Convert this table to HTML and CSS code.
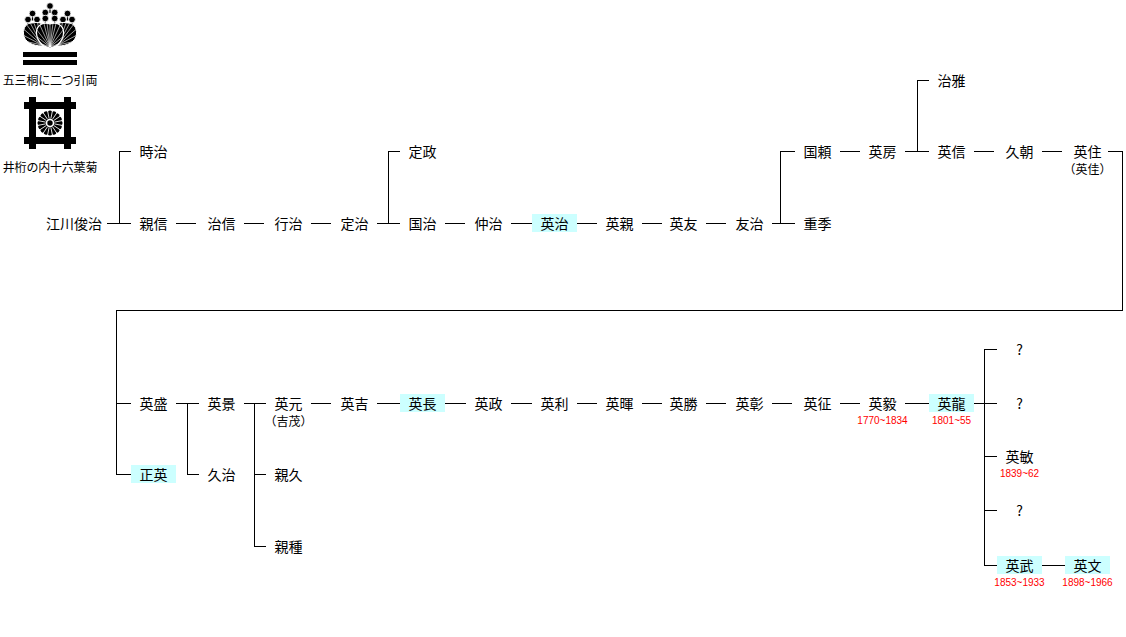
FILE: index.html
```html
<!DOCTYPE html>
<html lang="ja">
<head>
<meta charset="utf-8">
<title>江川家系図</title>
<link rel="stylesheet" href="styles.css">
</head>
<body>
<div class="tree">

  <div class="crests">
    <svg class="crest kiri" viewBox="0 0 56 68" width="56" height="68" aria-hidden="true">
      <defs>
        <path id="lfL" d="M20 46 C11 46 2 42 1.5 34 C1 27 5 22.5 10.5 23 C15 21.5 21 23 24 27 C26.5 31 25 40 20 46 Z"/>
        <path id="lfC" d="M28 48 C19 46 14 39 14.5 31.5 C15 25.5 21 21.5 28 24 C35 21.5 41 25.5 41.5 31.5 C42 39 37 46 28 48 Z"/>
        <clipPath id="clipL"><use href="#lfL"/></clipPath>
        <clipPath id="clipC"><use href="#lfC"/></clipPath>
        <g id="sideLeaf">
          <use href="#lfL" fill="#000" stroke="#fff" stroke-width="1"/>
          <g clip-path="url(#clipL)" stroke="#fff" stroke-width=".6">
            <line x1="20" y1="45" x2="-3" y2="40"/>
            <line x1="20" y1="45" x2="-3" y2="33"/>
            <line x1="20" y1="45" x2="-2" y2="26"/>
            <line x1="20" y1="45" x2="1" y2="20"/>
            <line x1="20" y1="45" x2="5" y2="17"/>
            <line x1="20" y1="45" x2="9" y2="15"/>
            <line x1="20" y1="45" x2="14" y2="15"/>
            <line x1="20" y1="45" x2="19" y2="15"/>
            <line x1="20" y1="45" x2="24" y2="16"/>
          </g>
        </g>
        <g id="bud">
          <line x1="0" y1="0" x2="0" y2="7" stroke="#000" stroke-width="1.2"/>
          <circle cx="0" cy="0" r="3.3" fill="#000" stroke="#fff" stroke-width=".8"/>
        </g>
      </defs>
      <use href="#bud" x="10.5" y="13.5"/>
      <use href="#bud" x="6" y="19.5"/>
      <use href="#bud" x="15" y="19.5"/>
      <use href="#bud" x="45.5" y="13.5"/>
      <use href="#bud" x="41" y="19.5"/>
      <use href="#bud" x="50" y="19.5"/>
      <use href="#bud" x="28" y="6"/>
      <use href="#bud" x="23.3" y="12.5"/>
      <use href="#bud" x="32.7" y="12.5"/>
      <use href="#bud" x="23.3" y="18.5"/>
      <use href="#bud" x="32.7" y="18.5"/>
      <use href="#sideLeaf"/>
      <use href="#sideLeaf" transform="translate(56 0) scale(-1 1)"/>
      <use href="#lfC" fill="#000" stroke="#fff" stroke-width="1.2"/>
      <g clip-path="url(#clipC)" stroke="#fff" stroke-width=".6">
        <line x1="28" y1="47" x2="9" y2="40"/>
        <line x1="28" y1="47" x2="9" y2="32"/>
        <line x1="28" y1="47" x2="11" y2="25"/>
        <line x1="28" y1="47" x2="15" y2="19"/>
        <line x1="28" y1="47" x2="20" y2="16"/>
        <line x1="28" y1="47" x2="24" y2="15"/>
        <line x1="28" y1="47" x2="28" y2="15"/>
        <line x1="28" y1="47" x2="32" y2="15"/>
        <line x1="28" y1="47" x2="36" y2="16"/>
        <line x1="28" y1="47" x2="41" y2="19"/>
        <line x1="28" y1="47" x2="45" y2="25"/>
        <line x1="28" y1="47" x2="47" y2="32"/>
        <line x1="28" y1="47" x2="47" y2="40"/>
      </g>
      <rect x="1" y="52" width="54" height="5" fill="#000"/>
      <rect x="1" y="60" width="54" height="5" fill="#000"/>
    </svg>
    <div class="crest-name first">五三桐に二つ引両</div>

    <svg class="crest igeta" viewBox="0 0 54 54" width="54" height="54" aria-hidden="true">
      <defs>
        <circle id="petal" cx="37" cy="27" r="2.5"/>
        <line id="vein" x1="31.5" y1="27" x2="40.5" y2="27" transform="rotate(11.25 27 27)"/>
      </defs>
      <g fill="#000">
        <rect x="1" y="6" width="52" height="7"/>
        <rect x="1" y="41" width="52" height="7"/>
        <rect x="6" y="1" width="7" height="52"/>
        <rect x="41" y="1" width="7" height="52"/>
        <circle cx="27" cy="27" r="10.2"/>
        <use href="#petal"/>
        <use href="#petal" transform="rotate(22.5 27 27)"/>
        <use href="#petal" transform="rotate(45 27 27)"/>
        <use href="#petal" transform="rotate(67.5 27 27)"/>
        <use href="#petal" transform="rotate(90 27 27)"/>
        <use href="#petal" transform="rotate(112.5 27 27)"/>
        <use href="#petal" transform="rotate(135 27 27)"/>
        <use href="#petal" transform="rotate(157.5 27 27)"/>
        <use href="#petal" transform="rotate(180 27 27)"/>
        <use href="#petal" transform="rotate(202.5 27 27)"/>
        <use href="#petal" transform="rotate(225 27 27)"/>
        <use href="#petal" transform="rotate(247.5 27 27)"/>
        <use href="#petal" transform="rotate(270 27 27)"/>
        <use href="#petal" transform="rotate(292.5 27 27)"/>
        <use href="#petal" transform="rotate(315 27 27)"/>
        <use href="#petal" transform="rotate(337.5 27 27)"/>
      </g>
      <g stroke="#fff" stroke-width=".8">
        <use href="#vein"/>
        <use href="#vein" transform="rotate(22.5 27 27)"/>
        <use href="#vein" transform="rotate(45 27 27)"/>
        <use href="#vein" transform="rotate(67.5 27 27)"/>
        <use href="#vein" transform="rotate(90 27 27)"/>
        <use href="#vein" transform="rotate(112.5 27 27)"/>
        <use href="#vein" transform="rotate(135 27 27)"/>
        <use href="#vein" transform="rotate(157.5 27 27)"/>
        <use href="#vein" transform="rotate(180 27 27)"/>
        <use href="#vein" transform="rotate(202.5 27 27)"/>
        <use href="#vein" transform="rotate(225 27 27)"/>
        <use href="#vein" transform="rotate(247.5 27 27)"/>
        <use href="#vein" transform="rotate(270 27 27)"/>
        <use href="#vein" transform="rotate(292.5 27 27)"/>
        <use href="#vein" transform="rotate(315 27 27)"/>
        <use href="#vein" transform="rotate(337.5 27 27)"/>
      </g>
      <circle cx="27" cy="27" r="4.3" fill="#fff"/>
      <circle cx="27" cy="27" r="2.7" fill="#000"/>
    </svg>
    <div class="crest-name second">井桁の内十六葉菊</div>
  </div>

  <!-- ===== upper generations ===== -->
  <div class="n root" style="grid-area: 7 / 1">江川俊治</div>
  <div class="hl w12" style="grid-area: 7 / 2"></div>
  <div class="brk ml12" style="grid-area: 4 / 2 / 8 / 3"></div>

  <div class="n" style="grid-area: 4 / 3">時治</div>
  <div class="n" style="grid-area: 7 / 3">親信</div>
  <div class="hl" style="grid-area: 7 / 4"></div>
  <div class="n" style="grid-area: 7 / 5">治信</div>
  <div class="hl" style="grid-area: 7 / 6"></div>
  <div class="n" style="grid-area: 7 / 7">行治</div>
  <div class="hl" style="grid-area: 7 / 8"></div>
  <div class="n" style="grid-area: 7 / 9">定治</div>
  <div class="hl w11" style="grid-area: 7 / 10"></div>
  <div class="brk ml11" style="grid-area: 4 / 10 / 8 / 11"></div>

  <div class="n" style="grid-area: 4 / 11">定政</div>
  <div class="n" style="grid-area: 7 / 11">国治</div>
  <div class="hl" style="grid-area: 7 / 12"></div>
  <div class="n" style="grid-area: 7 / 13">仲治</div>
  <div class="hl full" style="grid-area: 7 / 14"></div>
  <div class="n hi" style="grid-area: 7 / 15">英治</div>
  <div class="hl full" style="grid-area: 7 / 16"></div>
  <div class="n" style="grid-area: 7 / 17">英親</div>
  <div class="hl" style="grid-area: 7 / 18"></div>
  <div class="n" style="grid-area: 7 / 19">英友</div>
  <div class="hl" style="grid-area: 7 / 20"></div>
  <div class="n" style="grid-area: 7 / 21">友治</div>
  <div class="hl w8" style="grid-area: 7 / 22"></div>
  <div class="brk ml8" style="grid-area: 4 / 22 / 8 / 23"></div>

  <div class="n" style="grid-area: 4 / 23">国頼</div>
  <div class="n" style="grid-area: 7 / 23">重季</div>
  <div class="hl" style="grid-area: 4 / 24"></div>
  <div class="n" style="grid-area: 4 / 25">英房</div>
  <div class="hl w12" style="grid-area: 4 / 26"></div>
  <div class="brk ml12" style="grid-area: 2 / 26 / 5 / 27"></div>

  <div class="n" style="grid-area: 2 / 27">治雅</div>
  <div class="n" style="grid-area: 4 / 27">英信</div>
  <div class="hl" style="grid-area: 4 / 28"></div>
  <div class="n" style="grid-area: 4 / 29">久朝</div>
  <div class="hl" style="grid-area: 4 / 30"></div>
  <div class="n" style="grid-area: 4 / 31">英住</div>
  <div class="sub" style="grid-area: 5 / 31">（英佳）</div>

  <!-- continuation to the next line -->
  <div class="corner" style="grid-area: 4 / 32 / 10 / 33"></div>
  <div class="wrap" style="grid-area: 9 / 2 / 10 / 33"></div>
  <div class="brk ml9" style="grid-area: 9 / 2 / 18 / 3"></div>
  <div class="hl ml9" style="grid-area: 13 / 2"></div>

  <!-- ===== lower generations ===== -->
  <div class="n" style="grid-area: 13 / 3">英盛</div>
  <div class="n hi" style="grid-area: 17 / 3">正英</div>
  <div class="hl w11" style="grid-area: 13 / 4"></div>
  <div class="brk ml11" style="grid-area: 13 / 4 / 18 / 5"></div>

  <div class="n" style="grid-area: 13 / 5">英景</div>
  <div class="n" style="grid-area: 17 / 5">久治</div>
  <div class="hl w10" style="grid-area: 13 / 6"></div>
  <div class="brk ml10" style="grid-area: 13 / 6 / 22 / 7"></div>
  <div class="hl ml10" style="grid-area: 17 / 6"></div>

  <div class="n" style="grid-area: 13 / 7">英元</div>
  <div class="sub" style="grid-area: 14 / 7">（吉茂）</div>
  <div class="n" style="grid-area: 17 / 7">親久</div>
  <div class="n" style="grid-area: 21 / 7">親種</div>
  <div class="hl" style="grid-area: 13 / 8"></div>
  <div class="n" style="grid-area: 13 / 9">英吉</div>
  <div class="hl full" style="grid-area: 13 / 10"></div>
  <div class="n hi" style="grid-area: 13 / 11">英長</div>
  <div class="hl full" style="grid-area: 13 / 12"></div>
  <div class="n" style="grid-area: 13 / 13">英政</div>
  <div class="hl full" style="grid-area: 13 / 14"></div>
  <div class="n" style="grid-area: 13 / 15">英利</div>
  <div class="hl" style="grid-area: 13 / 16"></div>
  <div class="n" style="grid-area: 13 / 17">英暉</div>
  <div class="hl" style="grid-area: 13 / 18"></div>
  <div class="n" style="grid-area: 13 / 19">英勝</div>
  <div class="hl" style="grid-area: 13 / 20"></div>
  <div class="n" style="grid-area: 13 / 21">英彰</div>
  <div class="hl" style="grid-area: 13 / 22"></div>
  <div class="n" style="grid-area: 13 / 23">英征</div>
  <div class="hl" style="grid-area: 13 / 24"></div>
  <div class="n" style="grid-area: 13 / 25">英毅</div>
  <div class="date" style="grid-area: 14 / 25">1770~1834</div>
  <div class="hl full" style="grid-area: 13 / 26"></div>
  <div class="n hi" style="grid-area: 13 / 27">英龍</div>
  <div class="date" style="grid-area: 14 / 27">1801~55</div>
  <div class="hl w10" style="grid-area: 13 / 28"></div>
  <div class="brk ml10" style="grid-area: 11 / 28 / 24 / 29"></div>
  <div class="hl ml10" style="grid-area: 13 / 28"></div>
  <div class="hl ml10" style="grid-area: 16 / 28"></div>
  <div class="hl ml10" style="grid-area: 19 / 28"></div>

  <div class="n" style="grid-area: 11 / 29">?</div>
  <div class="n" style="grid-area: 13 / 29">?</div>
  <div class="n" style="grid-area: 16 / 29">英敏</div>
  <div class="date" style="grid-area: 17 / 29">1839~62</div>
  <div class="n" style="grid-area: 19 / 29">?</div>
  <div class="n hi" style="grid-area: 23 / 29">英武</div>
  <div class="date" style="grid-area: 24 / 29">1853~1933</div>
  <div class="hl full" style="grid-area: 23 / 30"></div>
  <div class="n hi" style="grid-area: 23 / 31">英文</div>
  <div class="date" style="grid-area: 24 / 31">1898~1966</div>

</div>
</body>
</html>
```

FILE: styles.css
```css
html, body {
  margin: 0;
  padding: 0;
  background: #fff;
}

body {
  font-family: "Noto Sans CJK JP", "Noto Sans", sans-serif;
  color: #000;
}

.tree {
  display: grid;
  width: 1126px;
  grid-template-columns:
    107px 24px 45px 23px 45px 22px 45px 21px 45px 23px 45px 21px
    45px 21px 45px 20px 45px 19px 45px 21px 45px 23px 45px 20px
    45px 24px 45px 23px 45px 23px 45px 16px;
  grid-template-rows:
    71px 18px 53px 18px 18px 36px 18px 69px 18px 21px 18px 36px
    18px 18px 17px 18px 18px 18px 18px 18px 18px 1px 18px 18px;
}

/* ---- family crests ---- */
.crests {
  grid-column: 1;
  grid-row: 1 / 7;
  width: 100px;
  justify-self: start;
  align-self: start;
  display: flex;
  flex-direction: column;
  align-items: center;
}

.crest {
  display: block;
}

.crest-name {
  font-size: 12px;
  line-height: 14px;
  white-space: nowrap;
  letter-spacing: -0.2px;
}

.crest-name.first {
  margin-top: 5px;
}

.igeta {
  margin-top: 9px;
}

.crest-name.second {
  margin-top: 10px;
}

/* ---- names ---- */
.n {
  font-size: 14px;
  line-height: 18px;
  height: 18px;
  text-align: center;
  white-space: nowrap;
}

.n.root {
  text-align: right;
  padding-right: 5px;
}

.n.hi {
  background: #ccffff;
}

.sub,
.date {
  display: flex;
  justify-content: center;
  white-space: nowrap;
  line-height: 18px;
  height: 18px;
}

.sub {
  font-size: 12px;
}

.date {
  font-family: "Liberation Sans", Arial, sans-serif;
  font-size: 10px;
  color: #ff0000;
}

/* ---- connector lines ---- */
.hl {
  align-self: start;
  justify-self: start;
  margin-top: 9px;
  height: 1px;
  width: 20px;
  background: #000;
}

.hl.full {
  justify-self: stretch;
  width: auto;
}

.hl.w8 { width: 8px; }
.hl.w10 { width: 10px; }
.hl.w11 { width: 11px; }
.hl.w12 { width: 12px; }

.hl.ml9,
.hl.ml10 {
  justify-self: stretch;
  width: auto;
}

.hl.ml9 { margin-left: 9px; }
.hl.ml10 { margin-left: 10px; }

/* bracket joining siblings: vertical bar with stubs at first and last row */
.brk {
  margin-top: 9px;
  margin-bottom: 8px;
  border: 1px solid #000;
  border-right: none;
}

.brk.ml8 { margin-left: 8px; }
.brk.ml9 { margin-left: 9px; }
.brk.ml10 { margin-left: 10px; }
.brk.ml11 { margin-left: 11px; }
.brk.ml12 { margin-left: 12px; }

/* line that carries the tree on to the second tier */
.corner {
  margin: 9px 3px 8px -2px;
  border-top: 1px solid #000;
  border-right: 1px solid #000;
}

.wrap {
  align-self: start;
  margin: 9px 3px 0 9px;
  height: 1px;
  background: #000;
}
```
